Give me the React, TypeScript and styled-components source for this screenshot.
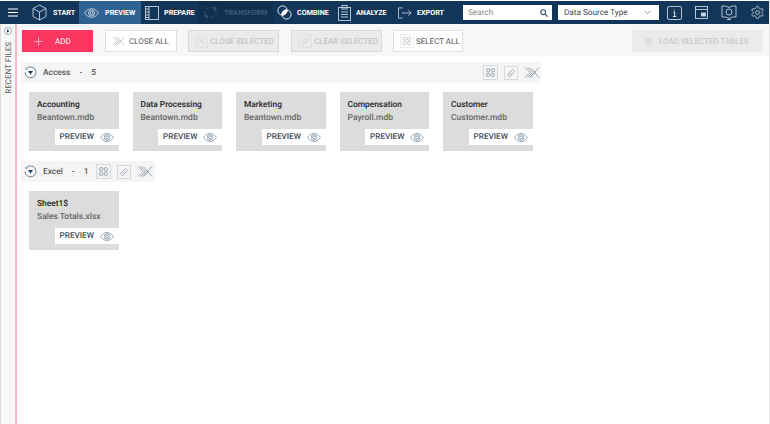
import React from 'react';
import styled, { createGlobalStyle } from 'styled-components';

const FONT = '"Roboto", "Noto Sans", "Liberation Sans", sans-serif';
const Global = createGlobalStyle`
  html, body { margin: 0; padding: 0; background: #fff; }
  body { font-family: ${FONT}; text-rendering: geometricPrecision; }
  button { text-rendering: geometricPrecision; }
  * { box-sizing: border-box; }
`;
const Page = styled.div`width: 770px; height: 424px; display: flex; flex-direction: column; overflow: hidden; padding-top: 1px; border-right: 1px solid #e4e4e4;`;
const Nav = styled.nav`height: 23px; background: #12365a; display: flex; align-items: center; color: #fff; flex: none;`;
const Burger = styled.div`width: 28px; display: flex; justify-content: center; padding-right: 2px;`;
const NavItem = styled.div<{ $active?: boolean; $dim?: boolean; $w: number; $pl: number; $gap: number }>`
  width: ${p => p.$w}px; height: 23px; display: flex; align-items: center; gap: ${p => p.$gap}px; padding-left: ${p => p.$pl}px;
  background: ${p => (p.$active ? '#2f6291' : p.$dim ? '#10304f' : 'transparent')};
  color: ${p => (p.$dim ? '#3f5b76' : '#fff')};
  font-size: 7.200px; font-weight: 700; white-space: nowrap;
  svg { flex: none; }
`;
const Search = styled.div`margin-left: 10px; width: 89px; height: 15px; background: #fff; display: flex; align-items: center; justify-content: space-between; padding: 0 4px 0 5px; color: #8a8a8a; font-size: 8.200px;`;
const Select = styled.div`margin-left: 6px; width: 101px; height: 15px; background: #fff; display: flex; align-items: center; justify-content: space-between; padding: 0 8px 0 6px; color: #444; font-size: 8.200px;`;
const NavIcons = styled.div`margin-left: 8px; display: flex; gap: 13px; align-items: center;`;
const Body = styled.div`flex: 1; display: flex; min-height: 0;`;
const Side = styled.aside`width: 17px; flex: none; border-left: 1px solid #ddd; border-right: 2px solid #f8b6c6; display: flex; flex-direction: column; align-items: center; padding-top: 3px; gap: 7px; background: #f8f8f8;`;
const SideLabel = styled.div`writing-mode: vertical-rl; transform: rotate(180deg); font-size: 8px; color: #555; white-space: nowrap;`;
const Main = styled.main`flex: 1; min-width: 0; display: flex; flex-direction: column;`;
const Toolbar = styled.div`height: 32px; background: #f7f7f7; display: flex; align-items: center; padding: 2px 0 0 5px; flex: none;`;
const AddBtn = styled.button`width: 71px; height: 22px; background: #f9365f; border: 1px solid #f9365f; color: #fff; font: 8px ${FONT}; display: flex; align-items: center; gap: 12px; padding: 0 0 0 11px;`;
const ToolBtn = styled.button<{ $off?: boolean; $w: number; $ml: number; $gap: number }>`
  width: ${p => p.$w}px; margin-left: ${p => p.$ml}px; height: 22px; padding: 0 0 0 6px; display: flex; align-items: center; gap: ${p => p.$gap}px;
  border: 1px solid ${p => (p.$off ? '#d9d9d9' : '#dedede')};
  background: ${p => (p.$off ? '#ebebeb' : '#fff')};
  color: ${p => (p.$off ? '#bbb' : '#555')};
  font: 8px ${FONT}; white-space: nowrap;
  svg { flex: none; }
`;
const LoadBtn = styled.button`width: 131px; margin-left: auto; margin-right: 6px; height: 22px; border: none; background: #ebebeb; color: #c2c2c2; font: 8px ${FONT}; display: flex; align-items: center; gap: 7px; padding: 0 0 0 13px; white-space: nowrap;`;
const Square = styled.span`width: 7px; height: 7px; background: #e0e0e0; display: block;`;
const Content = styled.div`flex: 1; padding: 6px 0 0 4px;`;
const GroupHead = styled.div<{ $w: number }>`width: ${p => p.$w}px; height: 21px; background: #f5f5f5; display: flex; align-items: center; padding-left: 3px; color: #555; font-size: 8.400px; font-weight: 500;`;
const GroupTitle = styled.span`margin-left: 6px; display: flex; gap: 9px;`;
const Tools = styled.div<{ $ml?: number }>`display: flex; gap: 6px; align-items: center; margin-left: ${p => (p.$ml ? `${p.$ml}px` : 'auto')}; padding-right: 1px; svg { flex: none; }`;
const Cards = styled.div`display: flex; gap: 14px; padding: 9px 0 10px 8px;`;
const Card = styled.div`width: 89.500px; height: 59px; background: #dcdcdc; display: flex; flex-direction: column; padding: 7px 0 0 8px;`;
const CardName = styled.div`font-size: 8.400px; font-weight: 500; color: #222; line-height: 12px;`;
const CardFile = styled.div`font-size: 8.500px; font-weight: 500; color: #666; line-height: 14px;`;
const Preview = styled.div`margin-top: auto; margin-bottom: 6px; align-self: flex-end; width: 64px; height: 16px; background: #fff; display: flex; align-items: center; gap: 6px; padding-left: 5px; font-size: 8.200px; font-weight: 500; color: #3e4a57;`;

const Eye = ({ c = '#7d93a8', w = 14, h = 9 }: { c?: string; w?: number; h?: number }) => (
  <svg width={w} height={h} viewBox="0 0 14 9" fill="none" stroke={c} strokeWidth="0.8">
    <path d="M.5 4.500C3 1.200 5 .5 7 .5s4 .7 6.500 4C11 7.800 9 8.500 7 8.500S3 7.800.5 4.500z" />
    <circle cx="7" cy="4.500" r="2.800" /><circle cx="7" cy="4.500" r="1.400" />
  </svg>
);
const DotBox = ({ c, s }: { c: string; s: number }) => <rect x=".5" y=".5" width={s - 1} height={s - 1} stroke={c} strokeWidth="1" strokeDasharray="1 1" opacity=".6" />;
const Grid = ({ c = '#8f9aa5', s = 15 }: { c?: string; s?: number }) => (
  <svg width={s} height={s} viewBox={`0 0 ${s} ${s}`} fill="none" stroke={c} strokeWidth=".9">
    <DotBox c={c} s={s} />
    <circle cx={s / 2 - 2.300} cy={s / 2 - 2.300} r="1.700" /><circle cx={s / 2 + 2.300} cy={s / 2 - 2.300} r="1.700" />
    <circle cx={s / 2 - 2.300} cy={s / 2 + 2.300} r="1.700" /><circle cx={s / 2 + 2.300} cy={s / 2 + 2.300} r="1.700" />
  </svg>
);
const Eraser = ({ c = '#8f9aa5' }: { c?: string }) => (
  <svg width="14" height="14" viewBox="0 0 14 14" fill="none" stroke={c} strokeWidth=".8">
    <DotBox c={c} s={14} />
    <path d="M3.500 8.500 8.500 3.500l2 2L6 10.500H5z" /><path d="M5.500 6.500 7.500 8.500" />
  </svg>
);
const DotX = ({ c = '#ccc' }: { c?: string }) => (
  <svg width="13" height="13" viewBox="0 0 13 13" fill="none" stroke={c} strokeWidth=".7">
    <DotBox c={c} s={13} />
    <path d="m3 3 7 7M10 3l-7 7" />
  </svg>
);
const Cross = ({ c = '#8f9aa5', w = 16, h = 11 }: { c?: string; w?: number; h?: number }) => (
  <svg width={w} height={h} viewBox="0 0 16 11" fill="none" stroke={c} strokeWidth=".9">
    <path d="M1 .5 6 5.500 1 10.500M3.500.5l5 5-5 5M6 .5l5 5-5 5" /><path d="M15 .5 6 10.500M15 10.500 9 4" />
  </svg>
);
const Collapse = () => (
  <svg width="13" height="13" viewBox="0 0 13 13" fill="none" style={{ flex: 'none' }}>
    <path d="M2 3.200A5.500 5.500 0 1 1 1 6.500" stroke="#4c6a86" strokeWidth=".8" />
    <path d="M1 2.500l1 1.200 1.200-.6" stroke="#4c6a86" strokeWidth=".7" />
    <path d="M4 5h5L6.500 8.400z" fill="#1d3f60" />
  </svg>
);
const S = { fill: 'none', stroke: '#c7d3de', strokeWidth: 0.9 };
const IconStart = () => <svg width="15" height="17" viewBox="0 0 15 17" {...S}><path d="M7.500 1 14 4.500v8L7.500 16 1 12.500v-8zM1 4.500l6.500 3.500L14 4.500M7.500 8v8" /></svg>;
const IconPrepare = () => <svg width="14" height="14" viewBox="0 0 14 14" {...S}><rect x=".5" y=".5" width="13" height="13" /><path d="M4 .5v13M1 3h3M1 6h3M1 9h3M1 11.500h3" /></svg>;
const IconTransform = () => <svg width="15" height="15" viewBox="0 0 16 16" fill="none" stroke="#3f5b76" strokeWidth=".9"><path d="M9 2.200A6 6 0 0 1 14 8M13 11a6 6 0 0 1-5 3M5 13.500A6 6 0 0 1 2.200 6M3.500 4A6 6 0 0 1 6 2.400" /><circle cx="12.500" cy="3.500" r="1.300" /><circle cx="3.500" cy="12" r="1.300" /></svg>;
const IconCombine = () => <svg width="15" height="15" viewBox="0 0 15 15" fill="none" stroke="#fff" strokeWidth=".9"><circle cx="5.500" cy="5.500" r="4.600" /><circle cx="9.500" cy="9.500" r="4.600" /><path d="M9.900 5A4.600 4.600 0 0 1 5 9.900 4.600 4.600 0 0 1 9.900 5z" fill="#fff" /></svg>;
const IconAnalyze = () => <svg width="13" height="16" viewBox="0 0 13 16" {...S}><rect x=".5" y="2.500" width="12" height="13" /><rect x="4" y=".5" width="5" height="3.500" /><path d="M3 7h7M3 9.500h7M3 12h7" /></svg>;
const IconExport = () => <svg width="14" height="12" viewBox="0 0 15 12" {...S}><path d="M5 .5H.5v11H5M4 6h10M11 3l3 3-3 3" /></svg>;
const SearchGlyph = () => <svg width="8" height="8" viewBox="0 0 8 8" fill="none" stroke="#33506c" strokeWidth="1.100"><circle cx="3.200" cy="3.200" r="2.400" /><path d="m5 5 2.600 2.600" /></svg>;
const Chevron = () => <svg width="7" height="5" viewBox="0 0 7 5" fill="none" stroke="#777" strokeWidth=".8"><path d="m.5.8 3 3 3-3" /></svg>;

type C = { n: string; f: string };
const access: C[] = [
  { n: 'Accounting', f: 'Beantown.mdb' },
  { n: 'Data Processing', f: 'Beantown.mdb' },
  { n: 'Marketing', f: 'Beantown.mdb' },
  { n: 'Compensation', f: 'Payroll.mdb' },
  { n: 'Customer', f: 'Customer.mdb' },
];
const CardItem = ({ n, f }: C) => (
  <Card>
    <CardName>{n}</CardName>
    <CardFile>{f}</CardFile>
    <Preview>PREVIEW <Eye /></Preview>
  </Card>
);

export default function App() {
  return (
    <Page>
      <Global />
      <Nav>
        <Burger>
          <svg width="10" height="9" viewBox="0 0 10 9" stroke="#fff" strokeWidth="1.200"><path d="M0 1h10M0 4.500h10M0 8h10" /></svg>
        </Burger>
        <NavItem $w={51} $pl={4} $gap={6}><IconStart />START</NavItem>
        <NavItem $w={62} $active $pl={5} $gap={6}><Eye c="#d5e0ea" w={15} h={10} />PREVIEW</NavItem>
        <NavItem $w={57} $pl={4} $gap={5}><IconPrepare />PREPARE</NavItem>
        <NavItem $w={75} $dim $pl={5} $gap={6}><IconTransform />TRANSFORM</NavItem>
        <NavItem $w={60} $pl={4} $gap={5}><IconCombine />COMBINE</NavItem>
        <NavItem $w={60} $pl={5} $gap={5}><IconAnalyze />ANALYZE</NavItem>
        <NavItem $w={60} $pl={5} $gap={5}><IconExport />EXPORT</NavItem>
        <Search>Search <SearchGlyph /></Search>
        <Select>Data Source Type <Chevron /></Select>
        <NavIcons>
          <svg width="15" height="14" viewBox="0 0 15 14" {...S}><rect x=".5" y=".5" width="14" height="13" rx="1.500" /><path d="M7.500 3.500v.8M6.200 6h1.500v4.500M6 10.500h3.200" stroke="#fff" /></svg>
          <svg width="13" height="13" viewBox="0 0 13 13" {...S}><rect x=".5" y=".5" width="12" height="12" /><path d="M.5 3.500h12" /><rect x="6.500" y="7" width="4" height="3" fill="#c7d3de" /></svg>
          <svg width="16" height="15" viewBox="0 0 16 15" {...S}><path d="M8 2.500C6 1 3.500 .8 1 1v11c2.500-.2 5 0 7 1.500 2-1.500 4.500-1.700 7-1.500V1c-2.500-.2-5 0-7 1.500z" /><circle cx="8" cy="7" r="3" /><path d="M6 14.500h4" /></svg>
          <svg width="15" height="15" viewBox="0 0 24 24" fill="none" stroke="#c7d3de" strokeWidth="1.400"><path d="M12.200 2h-.4a2 2 0 0 0-2 2v.2a2 2 0 0 1-1 1.700l-.4.200a2 2 0 0 1-2 0l-.1-.1a2 2 0 0 0-2.700.7l-.2.400a2 2 0 0 0 .7 2.700l.1.100a2 2 0 0 1 1 1.700v.5a2 2 0 0 1-1 1.700l-.1.100a2 2 0 0 0-.7 2.700l.2.400a2 2 0 0 0 2.700.7l.1-.1a2 2 0 0 1 2 0l.4.200a2 2 0 0 1 1 1.700v.2a2 2 0 0 0 2 2h.4a2 2 0 0 0 2-2v-.2a2 2 0 0 1 1-1.700l.4-.2a2 2 0 0 1 2 0l.1.100a2 2 0 0 0 2.700-.7l.2-.4a2 2 0 0 0-.7-2.700l-.1-.1a2 2 0 0 1-1-1.700v-.5a2 2 0 0 1 1-1.700l.1-.1a2 2 0 0 0 .7-2.700l-.2-.4a2 2 0 0 0-2.700-.7l-.1.100a2 2 0 0 1-2 0l-.4-.2a2 2 0 0 1-1-1.700V4a2 2 0 0 0-2-2z" /><circle cx="12" cy="12" r="3" /></svg>
        </NavIcons>
      </Nav>
      <Body>
        <Side>
          <svg width="8" height="8" viewBox="0 0 8 8"><circle cx="4" cy="4" r="3.500" fill="#fff" stroke="#6e8296" strokeWidth=".7" /><path d="M3 2.200 5.500 4 3 5.800z" fill="#1d3f60" /></svg>
          <SideLabel>RECENT FILES</SideLabel>
        </Side>
        <Main>
          <Toolbar>
            <AddBtn>
              <svg width="9" height="9" viewBox="0 0 9 9" stroke="#fda9bb" strokeWidth="1"><path d="M4.500 0v9M0 4.500h9" /></svg>
              ADD
            </AddBtn>
            <ToolBtn $w={72} $ml={12} $gap={4}><Cross w={13} h={10} c="#b5bcc4" /> CLOSE ALL</ToolBtn>
            <ToolBtn $off $w={91} $ml={11} $gap={2}><DotX /> CLOSE SELECTED</ToolBtn>
            <ToolBtn $off $w={91} $ml={12} $gap={2}><Eraser c="#ccc" /> CLEAR SELECTED</ToolBtn>
            <ToolBtn $w={70} $ml={11} $gap={2}><Grid c="#c4c4c4" s={14} /> SELECT ALL</ToolBtn>
            <LoadBtn><Square />LOAD SELECTED TABLES</LoadBtn>
          </Toolbar>
          <Content>
            <GroupHead $w={520}>
              <Collapse />
              <GroupTitle><span>Access</span><span>-</span><span>5</span></GroupTitle>
              <Tools><Grid /><Eraser /><Cross /></Tools>
            </GroupHead>
            <Cards>{access.map(c => <CardItem key={c.n} {...c} />)}</Cards>
            <GroupHead $w={134}>
              <Collapse />
              <GroupTitle><span>Excel</span><span>-</span><span>1</span></GroupTitle>
              <Tools $ml={8}><Grid /><Eraser /><Cross /></Tools>
            </GroupHead>
            <Cards><CardItem n="Sheet1$" f="Sales Totals.xlsx" /></Cards>
          </Content>
        </Main>
      </Body>
    </Page>
  );
}
